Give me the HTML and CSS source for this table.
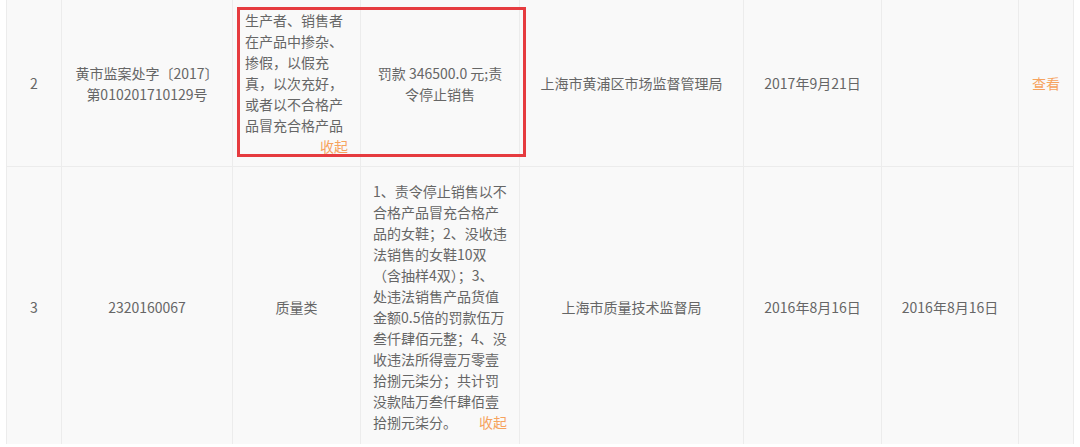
FILE: index.html
```html
<!DOCTYPE html>
<html lang="zh-CN">
<head>
<meta charset="utf-8">
<title>行政处罚</title>
<link rel="stylesheet" href="styles.css">
</head>
<body>
<div class="page">
  <table class="grid">
    <colgroup>
      <col class="c-no">
      <col class="c-code">
      <col class="c-type">
      <col class="c-result">
      <col class="c-org">
      <col class="c-date">
      <col class="c-date2">
      <col class="c-op">
    </colgroup>
    <tbody>
      <tr class="row-first">
        <td class="center">2</td>
        <td class="center">黄市监案处字〔2017〕<br>第010201710129号</td>
        <td class="left">生产者、销售者<br>在产品中掺杂、<br>掺假，以假充<br>真，以次充好，<br>或者以不合格产<br>品冒充合格产品<div class="fold-line"><span class="fold">收起</span></div></td>
        <td class="center">罚款 346500.0 元;责<br>令停止销售</td>
        <td class="center">上海市黄浦区市场监督管理局</td>
        <td class="center">2017年9月21日</td>
        <td class="center"></td>
        <td class="center"><span class="fold">查看</span></td>
      </tr>
      <tr class="row-second">
        <td class="center">3</td>
        <td class="center">2320160067</td>
        <td class="center">质量类</td>
        <td class="left">1、责令停止销售以不<br>合格产品冒充合格产<br>品的女鞋；2、没收违<br>法销售的女鞋10双<br>（含抽样4双）；3、<br>处违法销售产品货值<br>金额0.5倍的罚款伍万<br>叁仟肆佰元整；4、没<br>收违法所得壹万零壹<br>拾捌元柒分；共计罚<br>没款陆万叁仟肆佰壹<br>拾捌元柒分。<span class="fold fold-float">收起</span></td>
        <td class="center">上海市质量技术监督局</td>
        <td class="center">2016年8月16日</td>
        <td class="center">2016年8月16日</td>
        <td class="center"></td>
      </tr>
    </tbody>
  </table>
  <div class="mark"></div>
</div>
</body>
</html>
```

FILE: styles.css
```css
* {
  box-sizing: border-box;
}

html, body {
  margin: 0;
  padding: 0;
  background: #ffffff;
}

body {
  font-family: "Noto Sans CJK SC", "Microsoft YaHei", "Noto Sans", sans-serif;
  font-size: 14px;
  color: #666666;
  overflow: hidden;
}

.page {
  position: relative;
  padding: 0 7px 0 6px;
  height: 447px;
}

.grid {
  width: 1067px;
  margin-top: -3px;
  border-collapse: collapse;
  table-layout: fixed;
  background: #f9f9f9;
  border: 1px solid #e6e6e6;
}

.grid td {
  border: 1px solid #ececec;
  line-height: 21px;
  vertical-align: middle;
  padding: 12px 12px;
}

.c-no { width: 55px; }
.c-code { width: 171px; }
.c-type { width: 128px; }
.c-result { width: 159px; }
.c-org { width: 224px; }
.c-date { width: 138px; }
.c-date2 { width: 137px; }
.c-op { width: 55px; }

.center {
  text-align: center;
}

.left {
  text-align: left;
  white-space: nowrap;
}

.row-first td {
  padding-top: 12px;
  padding-bottom: 9px;
}

.row-second td {
  padding-top: 14px;
  padding-bottom: 12px;
}

.fold-line {
  text-align: right;
}

.fold {
  color: #f6a35e;
}

.fold-float {
  float: right;
}

.mark {
  position: absolute;
  left: 237px;
  top: 10px;
  width: 289px;
  height: 150px;
  border: 3px solid #e63b3f;
  pointer-events: none;
}
```
